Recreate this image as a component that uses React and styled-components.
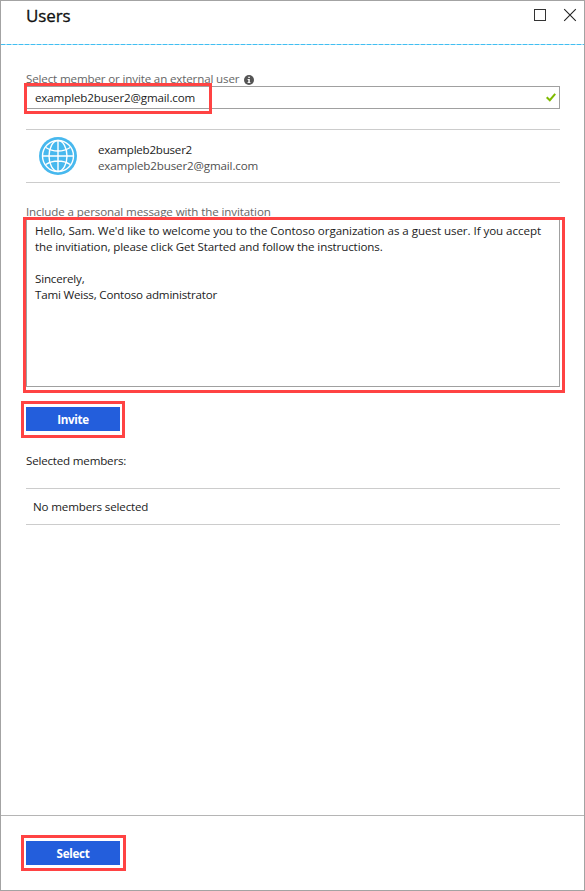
import React from "react";
import styled, { createGlobalStyle } from "styled-components";

const GlobalStyle = createGlobalStyle`
  * { box-sizing: border-box; }
  body { margin: 0; background: #fff; }
  button, input { font: inherit; }
`;

const Blade = styled.div`
  width: 585px;
  height: 891px;
  border: 1px solid #a3a3a3;
  background: #fff;
  color: #1c1c1c;
  font-family: "Open Sans", "Noto Sans", sans-serif;
  font-size: 11.6px;
  line-height: 16px;
  display: flex;
  flex-direction: column;
  overflow: hidden;
`;

const Header = styled.header`
  flex: none;
  height: 44px;
  padding: 0 7px 0 25px;
  display: flex;
  justify-content: space-between;
  background: repeating-linear-gradient(90deg, #41bff2 0 4px, #a5dcf5 4px 6px) bottom / 100% 1px no-repeat;
`;

const Title = styled.h1`
  margin: 3px 0 0;
  font-size: 17px;
  line-height: 24px;
  font-weight: 400;
  -webkit-text-stroke: 0.3px #111;
  letter-spacing: -0.1px;
  color: #111;
`;

const WindowControls = styled.div`
  display: flex;
  gap: 16px;
  padding-top: 7px;
`;

const Content = styled.main`
  flex: 1;
  padding: 26px 24px 0 25px;
  display: flex;
  flex-direction: column;
`;

const Label = styled.label`
  flex: none;
  height: ${(p) => p.$height}px;
  display: flex;
  align-items: flex-start;
  color: #666;
  letter-spacing: ${(p) => p.$spacing || 0}px;

  svg { margin: 4px 0 0 5px; }
`;

const Field = styled.div`
  position: relative;
  flex: none;
  height: ${(p) => p.$height}px;
`;

const Outline = styled.div`
  position: absolute;
  left: ${(p) => p.$left}px;
  top: ${(p) => p.$top}px;
  width: ${(p) => p.$width}px;
  height: ${(p) => p.$height}px;
  border: 3px solid #ff4343;
  pointer-events: none;
`;

const InputBox = styled.div`
  height: 23px;
  border: 1px solid #a0a0a0;
  padding: 0 3px 0 8px;
  display: flex;
  align-items: center;
`;

const Input = styled.input`
  flex: 1;
  min-width: 0;
  height: 16px;
  padding: 0;
  border: 0;
  outline: 0;
  color: #1c1c1c;
  background: none;
  letter-spacing: ${(p) => p.$spacing}px;
`;

const UserCard = styled.section`
  flex: none;
  height: 54px;
  margin-top: 20px;
  padding: 0 13px;
  border-top: 1px solid #ccc;
  border-bottom: 1px solid #ccc;
  display: flex;
  align-items: center;
  gap: 21px;
`;

const UserText = styled.div`
  display: flex;
  flex-direction: column;
  padding-top: 4px;
`;

const Text = styled.span`
  display: block;
  white-space: pre;
  color: ${(p) => p.$color || "#1c1c1c"};
  letter-spacing: ${(p) => p.$spacing || 0}px;
`;

const Message = styled.div`
  height: 168px;
  border: 1px solid #a0a0a0;
  padding: 3px 8px;
`;

const Button = styled.button`
  display: block;
  width: 94px;
  height: 24px;
  padding: 2px 0 0;
  border: 0;
  background: #235edc;
  color: #fff;
  font-weight: 700;
  line-height: 22px;
  letter-spacing: -0.3px;
`;

const MemberRow = styled.div`
  flex: none;
  height: 37px;
  margin-top: 19px;
  padding: 10px 7px;
  border-top: 1px solid #ccc;
  border-bottom: 1px solid #ccc;
`;

const Footer = styled.footer`
  flex: none;
  height: 75px;
  padding: 25px 25px 0;
  border-top: 1px solid #b5b5b5;
`;

const Spacer = styled.div`
  flex: none;
  height: ${(p) => p.$height}px;
`;

const MaximizeIcon = () => (
  <svg width="14" height="14" viewBox="0 0 14 14" fill="none" stroke="#333">
    <rect x="1.5" y="1.5" width="11" height="11" />
  </svg>
);

const CloseIcon = () => (
  <svg width="14" height="14" viewBox="0 0 14 14" fill="none" stroke="#222" strokeWidth="1.1">
    <path d="M1.2 1.2l11.6 11.6M12.8 1.2L1.2 12.8" />
  </svg>
);

const InfoIcon = () => (
  <svg width="10" height="10" viewBox="0 0 10 10">
    <circle cx="5" cy="5" r="5" fill="#555" />
    <path d="M4.3 1.7h1.5v1.4H4.3zM3.6 4h2.2v3.2h.7v.9h-3v-.9h.8V4.9h-.7z" fill="#fff" />
  </svg>
);

const CheckIcon = () => (
  <svg width="10" height="9" viewBox="0 0 10 9" fill="none" stroke="#7fba00" strokeWidth="2">
    <path d="M.7 4.2l3.1 3L9.2.9" />
  </svg>
);

const GlobeIcon = () => (
  <svg width="38" height="38" viewBox="0 0 38 38">
    <circle cx="19" cy="19" r="19" fill="#47b8ee" />
    <g fill="none" stroke="#fff" strokeWidth="1.4">
      <circle cx="19" cy="19" r="15.5" />
      <ellipse cx="19" cy="19" rx="9" ry="15.5" />
      <path d="M19 4v30M4 19h30M6.800 10.500c3.500 2.300 7.500 3.500 12.200 3.500s8.700-1.200 12.200-3.500M6.800 27.500c3.500-2.300 7.500-3.500 12.200-3.500s8.700 1.200 12.200 3.500" />
    </g>
  </svg>
);

export default function App() {
  return (
    <>
      <GlobalStyle />
      <Blade>
        <Header>
          <Title>Users</Title>
          <WindowControls>
            <MaximizeIcon />
            <CloseIcon />
          </WindowControls>
        </Header>
        <Content>
          <Label $height={15} $spacing={-0.15}>
            Select member or invite an external user
            <InfoIcon />
          </Label>
          <Field $height={23}>
            <InputBox>
              <Input $spacing={-0.14} defaultValue="exampleb2buser2@gmail.com" spellCheck={false} />
              <CheckIcon />
            </InputBox>
            <Outline $left={-2} $top={-3} $width={188} $height={31} />
          </Field>
          <UserCard>
            <GlobeIcon />
            <UserText>
              <Text $spacing={-0.24}>exampleb2buser2</Text>
              <Text $spacing={-0.14} $color="#505050">exampleb2buser2@gmail.com</Text>
            </UserText>
          </UserCard>
          <Spacer $height={21} />
          <Label $height={15} $spacing={-0.12}>Include a personal message with the invitation</Label>
          <Field $height={168}>
            <Message>
              <Text $spacing={-0.06}>Hello, Sam. We'd like to welcome you to the Contoso organization as a guest user. If you accept</Text>
              <Text $spacing={-0.115}>the invitiation, please click Get Started and follow the instructions.</Text>
              <Text> </Text>
              <Text $spacing={-0.2}>Sincerely,</Text>
              <Text $spacing={-0.2}>Tami Weiss, Contoso administrator</Text>
            </Message>
            <Outline $left={-3} $top={-2} $width={542} $height={176} />
          </Field>
          <Spacer $height={20} />
          <Field $height={24}>
            <Button>Invite</Button>
            <Outline $left={-5} $top={-6} $width={104} $height={37} />
          </Field>
          <Spacer $height={22} />
          <Text $spacing={-0.2}>Selected members:</Text>
          <MemberRow>
            <Text $spacing={-0.16}>No members selected</Text>
          </MemberRow>
        </Content>
        <Footer>
          <Field $height={24}>
            <Button>Select</Button>
            <Outline $left={-5} $top={-6} $width={105} $height={36} />
          </Field>
        </Footer>
      </Blade>
    </>
  );
}
